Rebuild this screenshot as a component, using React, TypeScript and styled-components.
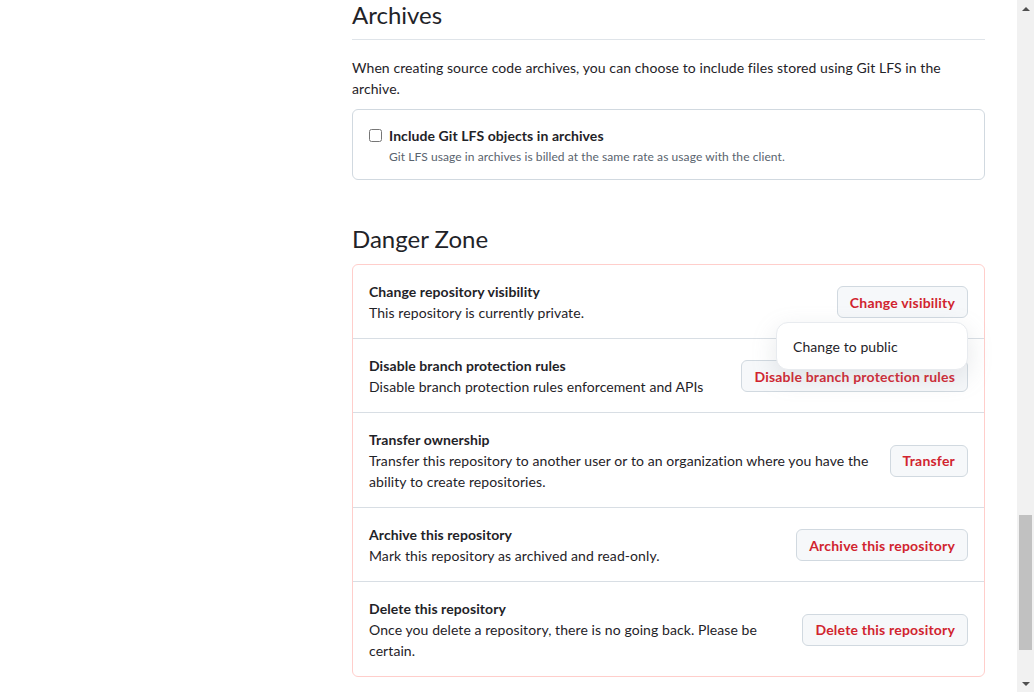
import React from "react";
import styled, { createGlobalStyle } from "styled-components";

const Global = createGlobalStyle`
  html, body { margin: 0; padding: 0; height: 100%; overflow: hidden; background: #fff; }
  body { font-family: Lato, "Liberation Sans", sans-serif; font-size: 14px; color: #1f2328; letter-spacing: 0.08px; }
  * { box-sizing: border-box; }
`;

const Shell = styled.div`
  display: flex;
  height: 692px;
`;

const Page = styled.div`
  flex: 1;
  display: grid;
  grid-template-columns: 352px 633px;
  align-content: start;
`;

const Main = styled.main`
  grid-column: 2;
`;

const Subhead = styled.h2<{ $danger?: boolean; $spaced?: boolean }>`
  margin: ${(p) => (p.$spaced ? "44px 0 0" : "0")};
  padding-bottom: ${(p) => (p.$danger ? "10px" : "9px")};
  border-bottom: ${(p) => (p.$danger ? "0" : "1px solid #d1d9e0b3")};
  font-size: 24px;
  font-weight: 400;
  line-height: 30px;
  letter-spacing: 0;
`;

const Para = styled.p`
  margin: 17px 0 10px;
  line-height: 21px;
`;

const OptionBox = styled.div`
  border: 1px solid #d1d9e0;
  border-radius: 6px;
  padding: 15px 16px 13px;
`;

const CheckRow = styled.label`
  display: flex;
  align-items: center;
  gap: 7px;
  font-weight: 700;
  line-height: 21px;
`;

const Check = styled.input`
  margin: 0;
  width: 13px;
  height: 13px;
`;

const Note = styled.div`
  margin: 2px 0 0 20px;
  font-size: 12px;
  line-height: 18px;
  color: #59636e;
`;

const DangerBox = styled.div`
  border: 1px solid #ffcecb;
  border-radius: 6px;
`;

const Row = styled.div`
  display: flex;
  align-items: center;
  gap: 16px;
  padding: 16px 16px 15px;
  & + & { border-top: 1px solid #d8dee4; }
`;

const RowText = styled.div`
  flex: 1;
  line-height: 21px;
`;

const RowTitle = styled.div`
  font-weight: 700;
`;

const Action = styled.div`
  position: relative;
  flex-shrink: 0;
`;

const DangerButton = styled.button`
  height: 32px;
  padding: 0 12px;
  border: 1px solid #d1d9e0;
  border-radius: 6px;
  background: #f6f8fa;
  color: #d1242f;
  font-family: inherit;
  font-size: 14px;
  font-weight: 700;
  letter-spacing: 0.2px;
  cursor: pointer;
  white-space: nowrap;
`;

const Menu = styled.div`
  position: absolute;
  top: calc(100% + 4px);
  right: 0;
  width: 192px;
  height: 48px;
  display: flex;
  align-items: center;
  padding: 0 16px;
  background: #fff;
  border: 1px solid #e8ebef;
  border-radius: 12px;
  box-shadow: 0 8px 24px rgba(140, 149, 159, 0.22);
  z-index: 2;
  white-space: nowrap;
`;

const Scrollbar = styled.div`
  width: 17px;
  background: #f1f1f1;
  display: flex;
  flex-direction: column;
  align-items: center;
`;

const Arrow = styled.div<{ $down?: boolean }>`
  height: 17px;
  display: flex;
  align-items: center;
  justify-content: center;
  &::before {
    content: "";
    border-left: 4px solid transparent;
    border-right: 4px solid transparent;
    ${(p) => (p.$down ? "border-top: 4px solid #505050;" : "border-bottom: 4px solid #505050;")}
  }
`;

const Track = styled.div`
  flex: 1;
  width: 100%;
  display: flex;
  flex-direction: column;
  justify-content: flex-end;
  align-items: center;
  padding-bottom: 25px;
`;

const Thumb = styled.div`
  width: 13px;
  height: 135px;
  background: #c1c1c1;
`;

const rows = [
  {
    title: "Change repository visibility",
    desc: "This repository is currently private.",
    button: "Change visibility",
    menu: "Change to public",
  },
  {
    title: "Disable branch protection rules",
    desc: "Disable branch protection rules enforcement and APIs",
    button: "Disable branch protection rules",
  },
  {
    title: "Transfer ownership",
    desc: "Transfer this repository to another user or to an organization where you have the ability to create repositories.",
    button: "Transfer",
  },
  {
    title: "Archive this repository",
    desc: "Mark this repository as archived and read-only.",
    button: "Archive this repository",
  },
  {
    title: "Delete this repository",
    desc: "Once you delete a repository, there is no going back. Please be certain.",
    button: "Delete this repository",
  },
];

export default function App() {
  return (
    <Shell>
      <Global />
      <Page>
        <Main>
          <Subhead>Archives</Subhead>
          <Para>
            When creating source code archives, you can choose to include files stored using Git LFS in the archive.
          </Para>
          <OptionBox>
            <CheckRow>
              <Check type="checkbox" />
              Include Git LFS objects in archives
            </CheckRow>
            <Note>Git LFS usage in archives is billed at the same rate as usage with the client.</Note>
          </OptionBox>
          <Subhead $danger $spaced>Danger Zone</Subhead>
          <DangerBox>
            {rows.map((r) => (
              <Row key={r.title}>
                <RowText>
                  <RowTitle>{r.title}</RowTitle>
                  <div>{r.desc}</div>
                </RowText>
                <Action>
                  <DangerButton>{r.button}</DangerButton>
                  {r.menu && <Menu>{r.menu}</Menu>}
                </Action>
              </Row>
            ))}
          </DangerBox>
        </Main>
      </Page>
      <Scrollbar>
        <Arrow />
        <Track>
          <Thumb />
        </Track>
        <Arrow $down />
      </Scrollbar>
    </Shell>
  );
}
